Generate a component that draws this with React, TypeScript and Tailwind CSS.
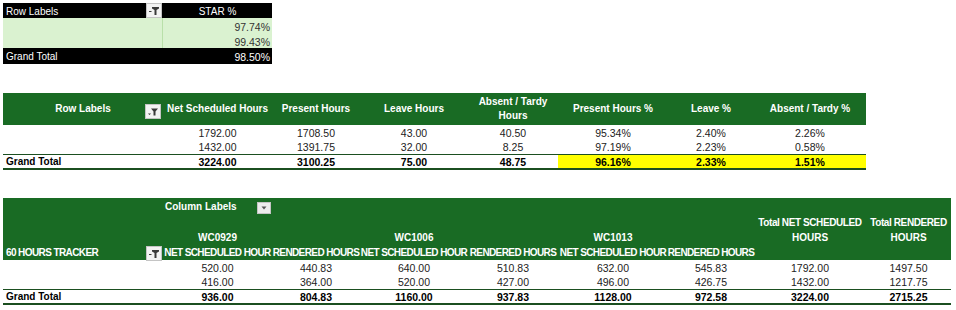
import React from "react";

const G = "bg-[#196B24]";

function FilterBtn({ variant }: { variant: "t" | "f" }) {
  return (
    <svg width="16" height="15" viewBox="0 0 16 15" className="block">
      <rect x="0.5" y="0.5" width="15" height="14" fill="#f3f3f3" stroke="#c4c4c4" />
      {variant === "f" ? (
        <>
          <path d="M6 4.5h7l-2.5 3v4h-2v-4z" fill="#3a3a3a" />
          <path d="M3 9.5h3l-1.5 1.5z" fill="#3a3a3a" />
        </>
      ) : (
        <>
          <path d="M6 4h7v1.5l-2.5 1.5v5h-2v-5l-2.5-1.5z" fill="#3a3a3a" />
          <path d="M3 8h2.5v1h-2.5z" fill="#3a3a3a" />
        </>
      )}
    </svg>
  );
}

function DropBtn() {
  return (
    <svg width="14" height="12" viewBox="0 0 14 12" className="block">
      <rect x="0.5" y="0.5" width="13" height="11" fill="#ececec" stroke="#c4c4c4" />
      <path d="M4.5 4.5h5l-2.5 3z" fill="#555" />
    </svg>
  );
}

const W = [
  "w-[160px]",
  "w-[109px]",
  "w-[88px]",
  "w-[108px]",
  "w-[90px]",
  "w-[110px]",
  "w-[86px]",
  "w-[112px]",
  "w-[85px]",
];

const t2Rows = [
  ["1792.00", "1708.50", "43.00", "40.50", "95.34%", "2.40%", "2.26%"],
  ["1432.00", "1391.75", "32.00", "8.25", "97.19%", "2.23%", "0.58%"],
];
const t2Total = ["3224.00", "3100.25", "75.00", "48.75", "96.16%", "2.33%", "1.51%"];

const t3Rows = [
  ["520.00", "440.83", "640.00", "510.83", "632.00", "545.83", "1792.00", "1497.50"],
  ["416.00", "364.00", "520.00", "427.00", "496.00", "426.75", "1432.00", "1217.75"],
];
const t3Total = ["936.00", "804.83", "1160.00", "937.83", "1128.00", "972.58", "3224.00", "2715.25"];

const hdrCls = "text-white font-bold text-[10px] leading-[14px]";
const capsCls = "tracking-[-0.6px]";

export default function App() {
  return (
    <div className="w-[956px] h-[310px] bg-white overflow-hidden font-['Liberation_Sans',Arial,sans-serif] flex flex-col">
      {/* Table 1 */}
      <div className="mt-[3px] ml-[3px] flex flex-col w-[269px]">
        <div className="flex h-[15px] bg-black text-white text-[10px] leading-[12px]">
          <div className="w-[160px] relative flex items-end pl-[3px]">
            <span>Row Labels</span>
            <div className="absolute left-[143px] top-0">
              <FilterBtn variant="t" />
            </div>
          </div>
          <div className="w-[109px] flex items-end justify-center">STAR %</div>
        </div>
        {["97.74%", "99.43%"].map((v) => (
          <div key={v} className="flex h-[15px] bg-[#DAF2D0] text-[10.5px] leading-[12px] text-[#333]">
            <div className="w-[160px] border-r border-[#b9e0a9]" />
            <div className="w-[109px] flex items-end justify-end pr-[2px]">{v}</div>
          </div>
        ))}
        <div className="flex h-[16px] bg-black text-white leading-[12px] pb-[1px]">
          <div className="w-[160px] flex items-end pl-[3px] text-[10px]">Grand Total</div>
          <div className="w-[109px] flex items-end justify-end pr-[2px] text-[10.5px]">98.50%</div>
        </div>
      </div>

      {/* Table 2 */}
      <div className="mt-[29px] ml-[3px] flex flex-col w-[863px]">
        <div className={`flex h-[32px] ${G} ${hdrCls}`}>
          <div className={`${W[0]} relative flex items-center justify-center`}>
            <span>Row Labels</span>
            <div className="absolute left-[142px] top-[11px]">
              <FilterBtn variant="f" />
            </div>
          </div>
          {[
            "Net Scheduled Hours",
            "Present Hours",
            "Leave Hours",
            "Absent / Tardy Hours",
            "Present Hours %",
            "Leave %",
            "Absent / Tardy %",
          ].map((h, i) => (
            <div key={h} className={`${W[i + 1]} flex items-center justify-center text-center px-[4px]`}>
              {h === "Absent / Tardy Hours" ? (
                <span>
                  Absent / Tardy
                  <br />
                  Hours
                </span>
              ) : (
                <span className="whitespace-nowrap">{h}</span>
              )}
            </div>
          ))}
        </div>
        {t2Rows.map((r, ri) => (
          <div
            key={ri}
            className={`flex ${ri === 0 ? "h-[15px]" : "h-[14px]"} text-[10.5px] leading-[12px] text-[#222]`}
          >
            <div className={W[0]} />
            {r.map((v, i) => (
              <div key={i} className={`${W[i + 1]} flex items-center justify-center`}>
                {v}
              </div>
            ))}
          </div>
        ))}
        <div className="flex h-[16px] border-t border-b-2 border-[#1b4f20] text-black font-bold leading-[12px]">
          <div className={`${W[0]} flex items-center pl-[3px] text-[10px]`}>Grand Total</div>
          {t2Total.map((v, i) => (
            <div
              key={i}
              className={`${W[i + 1]} flex items-center justify-center text-[10.5px] ${i >= 4 ? "bg-[#FFFF00]" : ""}`}
            >
              {v}
            </div>
          ))}
        </div>
      </div>

      {/* Table 3 */}
      <div className="mt-[28px] ml-[3px] flex flex-col w-[948px]">
        <div className={`flex flex-col ${G} ${hdrCls}`}>
          <div className="flex h-[17px]">
            <div className={W[0]} />
            <div className={`${W[1]} relative flex items-center pl-[2px]`}>
              <span>Column Labels</span>
              <div className="absolute left-[94px] top-[4px]">
                <DropBtn />
              </div>
            </div>
          </div>
          <div className="flex h-[15px]">
            <div className="w-[751px]" />
            <div className={`${W[7]} flex items-center justify-center whitespace-nowrap tracking-[-0.4px]`}>
              Total NET SCHEDULED
            </div>
            <div className={`${W[8]} flex items-center justify-center whitespace-nowrap tracking-[-0.4px]`}>
              Total RENDERED
            </div>
          </div>
          <div className="flex h-[15px]">
            <div className={W[0]} />
            <div className={`${W[1]} flex items-center justify-center`}>WC0929</div>
            <div className={W[2]} />
            <div className={`${W[3]} flex items-center justify-center`}>WC1006</div>
            <div className={W[4]} />
            <div className={`${W[5]} flex items-center justify-center`}>WC1013</div>
            <div className={W[6]} />
            <div className={`${W[7]} flex items-center justify-center`}>HOURS</div>
            <div className={`${W[8]} flex items-center justify-center`}>HOURS</div>
          </div>
          <div className="flex h-[15px]">
            <div className={`${W[0]} relative flex items-center pl-[3px] ${capsCls}`}>
              <span>60 HOURS TRACKER</span>
              <div className="absolute left-[143px] top-[1px]">
                <FilterBtn variant="t" />
              </div>
            </div>
            {["NET SCHEDULED HOUR", "RENDERED HOURS", "NET SCHEDULED HOUR", "RENDERED HOURS", "NET SCHEDULED HOUR", "RENDERED HOURS"].map(
              (h, i) => (
                <div
                  key={i}
                  className={`${W[i + 1]} flex items-center justify-center whitespace-nowrap ${capsCls}`}
                >
                  {h}
                </div>
              )
            )}
          </div>
        </div>
        {t3Rows.map((r, ri) => (
          <div
            key={ri}
            className={`flex ${ri === 0 ? "h-[15px]" : "h-[14px]"} text-[10.5px] leading-[12px] text-[#222]`}
          >
            <div className={W[0]} />
            {r.map((v, i) => (
              <div key={i} className={`${W[i + 1]} flex items-center justify-center`}>
                {v}
              </div>
            ))}
          </div>
        ))}
        <div className="flex h-[16px] border-t border-b-2 border-[#1b4f20] text-black font-bold leading-[12px]">
          <div className={`${W[0]} flex items-center pl-[3px] text-[10px]`}>Grand Total</div>
          {t3Total.map((v, i) => (
            <div key={i} className={`${W[i + 1]} flex items-center justify-center text-[10.5px]`}>
              {v}
            </div>
          ))}
        </div>
      </div>
    </div>
  );
}
